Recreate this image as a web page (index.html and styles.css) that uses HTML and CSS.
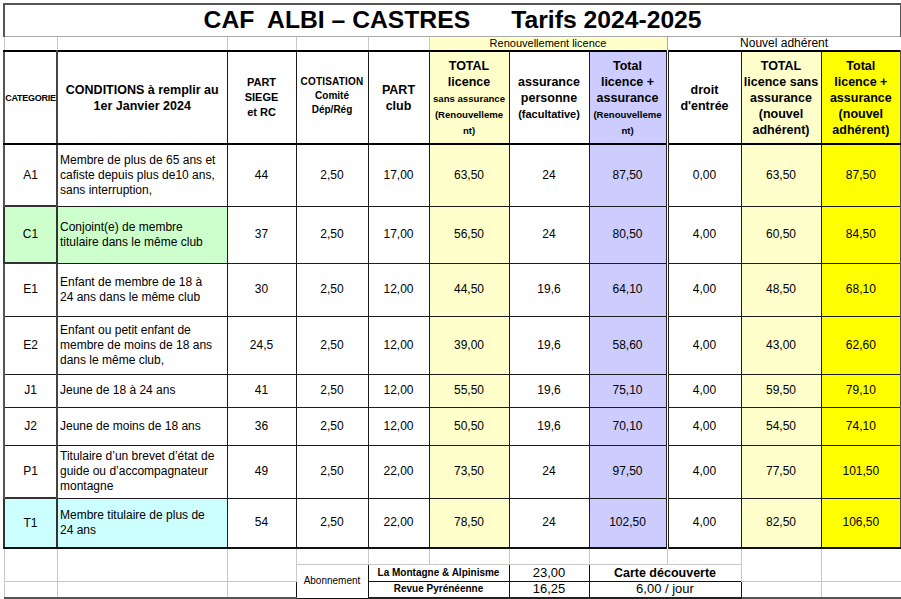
FILE: index.html
```html
<!DOCTYPE html>
<html lang="fr">
<head>
<meta charset="utf-8">
<title>CAF Albi – Castres · Tarifs 2024-2025</title>
<link rel="stylesheet" href="styles.css">
</head>
<body>
<div class="sheet">
<table class="tarifs">
  <colgroup>
    <col class="w-cat"><col class="w-cond"><col class="w-siege"><col class="w-coti"><col class="w-club">
    <col class="w-tot"><col class="w-ass"><col class="w-totass"><col class="w-droit"><col class="w-ntot"><col class="w-ntotass">
  </colgroup>
  <tr class="h-title">
    <td colspan="11" class="title">CAF  ALBI – CASTRES      Tarifs 2024-2025</td>
  </tr>
  <tr class="h-group">
    <td class="grid edge-l"></td><td class="grid"></td><td class="grid"></td><td class="grid"></td><td class="grid"></td>
    <td colspan="3" class="grid renew-group">Renouvellement licence</td>
    <td colspan="3" class="grid new-group dbl edge-r">Nouvel adhérent</td>
  </tr>
  <tr class="h-head">
    <th class="hd cat-col cat-h edge-l">CATEGORIE</th>
    <th class="hd cond-h">CONDITIONS à remplir au<br>1er Janvier 2024</th>
    <th class="hd siege-h">PART<br>SIEGE<br>et RC</th>
    <th class="hd coti-h"><span class="coti">COTISATION</span><br>Comité<br>Dép/Rég</th>
    <th class="hd club-h">PART<br>club</th>
    <th class="hd lt-yellow tot-h">TOTAL<br>licence<br><span class="tiny">sans assurance<br>(Renouvelleme<br>nt)</span></th>
    <th class="hd ass-h">assurance<br>personne<br><span class="small">(facultative)</span></th>
    <th class="hd lavender tot-h">Total<br>licence +<br>assurance<br><span class="tiny">(Renouvelleme<br>nt)</span></th>
    <th class="hd dbl droit-h">droit<br>d'entrée</th>
    <th class="hd lt-yellow new-h">TOTAL<br>licence sans<br>assurance<br>(nouvel<br>adhérent)</th>
    <th class="hd yellow new-h edge-r">Total<br>licence +<br>assurance<br>(nouvel<br>adhérent)</th>
  </tr>
  <tr class="row h-62">
    <td class="cat-col edge-l">A1</td>
    <td class="cond">Membre de plus de 65 ans et<br>cafiste depuis plus de10 ans,<br>sans interruption,</td>
    <td>44</td><td>2,50</td><td>17,00</td>
    <td class="lt-yellow">63,50</td><td>24</td><td class="lavender">87,50</td>
    <td class="dbl">0,00</td><td class="lt-yellow">63,50</td><td class="yellow edge-r">87,50</td>
  </tr>
  <tr class="row h-57">
    <td class="cat-col edge-l green sel">C1</td>
    <td class="cond green">Conjoint(e) de membre<br>titulaire dans le même club</td>
    <td>37</td><td>2,50</td><td>17,00</td>
    <td class="lt-yellow">56,50</td><td>24</td><td class="lavender">80,50</td>
    <td class="dbl">4,00</td><td class="lt-yellow">60,50</td><td class="yellow edge-r">84,50</td>
  </tr>
  <tr class="row h-53">
    <td class="cat-col edge-l">E1</td>
    <td class="cond">Enfant de membre de 18 à<br>24 ans dans le même club</td>
    <td>30</td><td>2,50</td><td>12,00</td>
    <td class="lt-yellow">44,50</td><td>19,6</td><td class="lavender">64,10</td>
    <td class="dbl">4,00</td><td class="lt-yellow">48,50</td><td class="yellow edge-r">68,10</td>
  </tr>
  <tr class="row h-58">
    <td class="cat-col edge-l">E2</td>
    <td class="cond">Enfant ou petit enfant de<br>membre de moins de 18 ans<br>dans le même club,</td>
    <td>24,5</td><td>2,50</td><td>12,00</td>
    <td class="lt-yellow">39,00</td><td>19,6</td><td class="lavender">58,60</td>
    <td class="dbl">4,00</td><td class="lt-yellow">43,00</td><td class="yellow edge-r">62,60</td>
  </tr>
  <tr class="row h-33">
    <td class="cat-col edge-l">J1</td>
    <td class="cond">Jeune de 18 à 24 ans</td>
    <td>41</td><td>2,50</td><td>12,00</td>
    <td class="lt-yellow">55,50</td><td>19,6</td><td class="lavender">75,10</td>
    <td class="dbl">4,00</td><td class="lt-yellow">59,50</td><td class="yellow edge-r">79,10</td>
  </tr>
  <tr class="row h-38">
    <td class="cat-col edge-l">J2</td>
    <td class="cond">Jeune de moins de 18 ans</td>
    <td>36</td><td>2,50</td><td>12,00</td>
    <td class="lt-yellow">50,50</td><td>19,6</td><td class="lavender">70,10</td>
    <td class="dbl">4,00</td><td class="lt-yellow">54,50</td><td class="yellow edge-r">74,10</td>
  </tr>
  <tr class="row h-53">
    <td class="cat-col edge-l">P1</td>
    <td class="cond">Titulaire d’un brevet d’état de<br>guide ou d’accompagnateur<br>montagne</td>
    <td>49</td><td>2,50</td><td>22,00</td>
    <td class="lt-yellow">73,50</td><td>24</td><td class="lavender">97,50</td>
    <td class="dbl">4,00</td><td class="lt-yellow">77,50</td><td class="yellow edge-r">101,50</td>
  </tr>
  <tr class="row h-50 last">
    <td class="cat-col edge-l cyan sel">T1</td>
    <td class="cond cyan">Membre titulaire de plus de<br>24 ans</td>
    <td>54</td><td>2,50</td><td>22,00</td>
    <td class="lt-yellow">78,50</td><td>24</td><td class="lavender">102,50</td>
    <td class="dbl">4,00</td><td class="lt-yellow">82,50</td><td class="yellow edge-r">106,50</td>
  </tr>
  <tr class="foot h-16">
    <td rowspan="2" class="grid edge-l"></td><td rowspan="2" class="grid"></td><td rowspan="2" class="grid"></td>
    <td class="grid"></td><td class="grid"></td><td class="grid"></td><td class="grid"></td><td class="grid"></td><td class="grid"></td>
    <td rowspan="2" class="grid"></td><td rowspan="2" class="grid edge-r"></td>
  </tr>
  <tr class="foot h-17">
    <td rowspan="2" class="box abo">Abonnement</td>
    <td colspan="2" class="box revue">La Montagne &amp; Alpinisme</td>
    <td class="box price">23,00</td>
    <td colspan="2" class="box carte">Carte découverte</td>
  </tr>
  <tr class="foot h-17 bottom">
    <td class="grid edge-l"></td><td class="grid"></td><td class="grid"></td>
    <td colspan="2" class="box revue">Revue Pyrénéenne</td>
    <td class="box price">16,25</td>
    <td colspan="2" class="box jour">6,00 / jour</td>
    <td class="grid"></td><td class="grid edge-r"></td>
  </tr>
</table>
</div>
</body>
</html>
```
FILE: styles.css
```css
html, body {
  margin: 0;
  padding: 0;
  background: #ffffff;
}
body {
  font-family: "Liberation Sans", Arial, sans-serif;
  color: #000;
}
.sheet {
  padding: 3px 0 0 3px;
}
.tarifs {
  border-collapse: collapse;
  table-layout: fixed;
  width: 897px;
}
.w-cat { width: 53px; }
.w-cond { width: 170px; }
.w-siege { width: 69px; }
.w-coti { width: 72px; }
.w-club { width: 61px; }
.w-tot { width: 80px; }
.w-ass { width: 80px; }
.w-totass { width: 78px; }
.w-droit { width: 74px; }
.w-ntot { width: 80px; }
.w-ntotass { width: 80px; }

.tarifs td, .tarifs th {
  border: 1px solid #1c1c1c;
  padding: 0 1px;
  font-size: 12px;
  font-weight: normal;
  text-align: center;
  vertical-align: middle;
  line-height: 15px;
  overflow: hidden;
}

/* title */
.h-title { height: 32px; }
.tarifs td.title {
  border: 2px solid #555;
  border-bottom: 1px solid #a8a8a8;
  font-size: 24.7px;
  font-weight: bold;
  white-space: pre;
  line-height: 28px;
}

/* group row */
.h-group { height: 15px; }
.tarifs td.grid {
  border: 1px solid #c8c8c8;
  font-size: 11px;
  line-height: 13px;
}
.tarifs .h-group td.grid { border-top-color: #a8a8a8; }
.tarifs td.renew-group {
  background: #ffffcc;
  border-color: #a8a8a8;
}
.tarifs td.new-group {
  font-size: 12px;
}

/* header row */
.h-head { height: 93px; }
.tarifs th.hd {
  font-weight: bold;
  border-top: 2px solid #000;
  border-bottom: 2px solid #000;
  font-size: 12.5px;
  line-height: 16px;
}
.tarifs th.cat-h {
  font-size: 9px;
  letter-spacing: -0.25px;
  padding: 0;
  white-space: nowrap;
  overflow: visible;
}
.tarifs th.siege-h { font-size: 11px; line-height: 15px; }
.tarifs th.coti-h { font-size: 10px; line-height: 14px; padding-bottom: 4px; }
.coti { letter-spacing: 0.2px; }
.tiny { font-size: 9.6px; line-height: 14px; }
.small { font-size: 11px; }

/* body rows */
.h-62 { height: 62px; }
.h-57 { height: 57px; }
.h-53 { height: 53px; }
.h-58 { height: 58px; }
.h-33 { height: 33px; }
.h-38 { height: 38px; }
.h-50 { height: 50px; }
.h-16 { height: 16px; }
.h-17 { height: 17px; }

.tarifs td.cond {
  text-align: left;
  padding-left: 2px;
  white-space: nowrap;
}
.tarifs .last td { border-bottom: 2px solid #111; }

.tarifs .cat-col { border-right: 2px solid #444; }
.tarifs .edge-l { border-left: 2px solid #555; }
.tarifs .edge-r { border-right: 2px solid #555; }
.tarifs .sel { border: 2px solid #333; }
.tarifs .dbl { border-left: 3px double #222; }

.lt-yellow { background: #ffffcc; }
.lavender { background: #ccccff; }
.yellow { background: #ffff00; }
.green { background: #ccffcc; }
.cyan { background: #ccffff; }

/* footer */
.tarifs td.box {
  border: 1px solid #111;
  font-size: 10px;
  line-height: 14px;
}
.tarifs td.revue { font-weight: bold; }
.tarifs td.price { font-size: 13px; }
.tarifs td.carte { font-weight: bold; font-size: 12.5px; }
.tarifs td.jour { font-size: 13px; }
.tarifs .bottom td { border-bottom: 2px solid #555; }
.tarifs .bottom td.box { border-bottom: 2px solid #222; }
```
